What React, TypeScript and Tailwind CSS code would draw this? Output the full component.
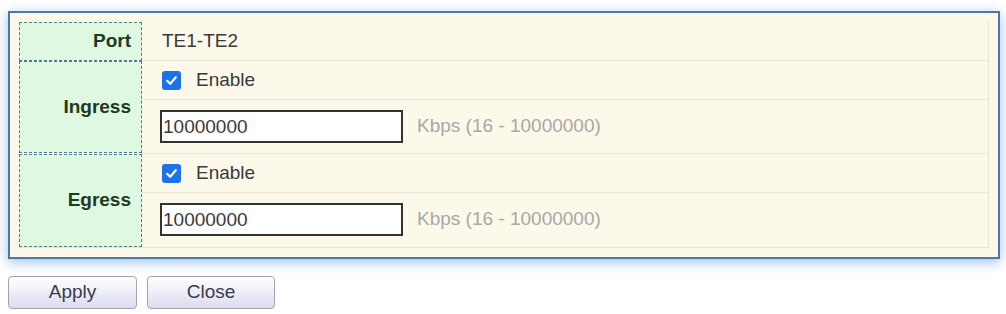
import React from 'react';

function Check() {
  return (
    <span className="flex h-[19px] w-[19px] items-center justify-center rounded-[3px] bg-[#1a73e8]">
      <svg width="13" height="13" viewBox="0 0 12 12" fill="none">
        <path d="M2 6.3 L4.8 9 L10 3" stroke="white" strokeWidth="2" strokeLinecap="round" strokeLinejoin="round" />
      </svg>
    </span>
  );
}

function Label({ text, className }: { text: string; className: string }) {
  return (
    <div
      className={`flex items-center justify-end border border-dashed border-[#4f7d8c] bg-[#def8e1] pr-[10px] text-[19px] font-bold text-[#1e3a22] ${className}`}
    >
      {text}
    </div>
  );
}

function RateRows() {
  return (
    <div className="flex flex-col">
      <div className="flex h-[39px] items-center gap-[15px] border-b border-[#ebe7d6] pl-[20px]">
        <Check />
        <span className="text-[19px] text-[#3a3a3a]">Enable</span>
      </div>
      <div className="flex h-[53px] items-center pl-[18px]">
        <input
          readOnly
          value="10000000"
          className="h-[33px] w-[243px] border-2 border-[#333] bg-white px-[1px] text-[19px] text-[#3a3a3a] outline-none"
        />
        <span className="ml-[14px] text-[19px] text-[#a8a8a8]">Kbps (16 - 10000000)</span>
      </div>
    </div>
  );
}

export default function App() {
  return (
    <div
      className="h-[314px] w-[1006px] bg-white pt-[11px]"
      style={{ fontFamily: '"Liberation Sans", Arial, sans-serif' }}
    >
      <div className="mx-[8px] w-[992px] border-2 border-[#4b78a8] bg-[#fcf9ea] p-[9px] shadow-[0_3px_12px_rgba(90,150,225,0.6)]">
        <div className="grid grid-cols-[123px_1fr] border-r border-b border-[#e8e4d2]">
          <Label text="Port" className="h-[39px]" />
          <div className="flex items-center border-b border-[#ebe7d6] pl-[20px] text-[19px] text-[#3a3a3a]">TE1-TE2</div>

          <Label text="Ingress" className="h-[92px]" />
          <div className="border-b border-[#ebe7d6]">
            <RateRows />
          </div>

          <Label text="Egress" className="h-[93px]" />
          <RateRows />
        </div>
      </div>

      <div className="ml-[8px] mt-[17px] flex gap-[10px]">
        <button className="h-[33px] w-[129px] rounded-[4px] border border-[#a3a3b0] bg-gradient-to-b from-white to-[#dcdcf0] text-[19px] text-[#3a3a4a]">
          Apply
        </button>
        <button className="h-[33px] w-[128px] rounded-[4px] border border-[#a3a3b0] bg-gradient-to-b from-white to-[#dcdcf0] text-[19px] text-[#3a3a4a]">
          Close
        </button>
      </div>
    </div>
  );
}
